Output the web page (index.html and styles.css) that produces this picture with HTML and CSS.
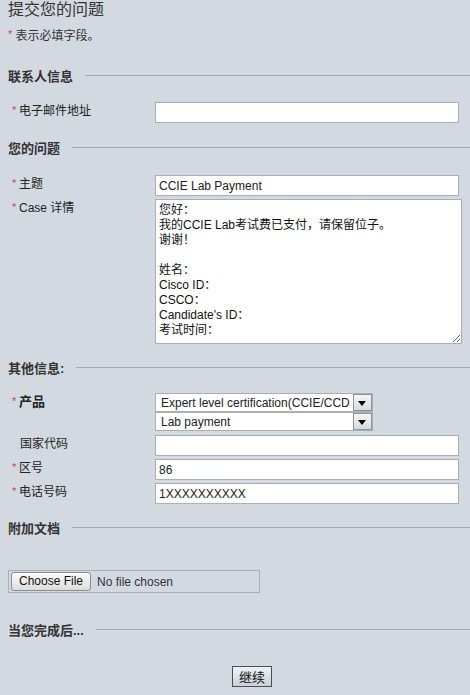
FILE: index.html
```html
<!DOCTYPE html>
<html lang="zh-CN">
<head>
    <meta charset="UTF-8">
    <meta name="viewport" content="width=device-width, initial-scale=1.0">
    <title>提交您的问题</title>
    <link rel="stylesheet" href="styles.css">
</head>
<body>
    <h1 class="title">提交您的问题</h1>
    <p class="note"><span class="req">*</span> 表示必填字段。</p>

    <div class="section s-contact"><span>联系人信息</span></div>
    <div class="row r-email">
        <label class="label"><span class="req">*</span>电子邮件地址</label>
        <input class="field" type="text" value="">
    </div>

    <div class="section s-question"><span>您的问题</span></div>
    <div class="row r-subject">
        <label class="label"><span class="req">*</span>主题</label>
        <input class="field" type="text" value="CCIE Lab Payment">
    </div>
    <div class="row r-detail">
        <label class="label"><span class="req">*</span>Case 详情</label>
        <textarea class="details">您好：
我的CCIE Lab考试费已支付，请保留位子。
谢谢！

姓名：
Cisco ID：
CSCO：
Candidate's ID：
考试时间：</textarea>
    </div>

    <div class="section s-other"><span>其他信息:</span></div>
    <div class="row r-product">
        <label class="label bold"><span class="req">*</span>产品</label>
        <div class="selects">
            <div class="select">
                <span class="select-text">Expert level certification(CCIE/CCD</span>
                <span class="select-arrow"></span>
            </div>
            <div class="select">
                <span class="select-text">Lab payment</span>
                <span class="select-arrow"></span>
            </div>
        </div>
    </div>
    <div class="row r-small r-first">
        <label class="label plain">国家代码</label>
        <input class="field" type="text" value="">
    </div>
    <div class="row r-small">
        <label class="label"><span class="req">*</span>区号</label>
        <input class="field" type="text" value="86">
    </div>
    <div class="row r-small">
        <label class="label"><span class="req">*</span>电话号码</label>
        <input class="field" type="text" value="1XXXXXXXXXX">
    </div>

    <div class="section s-attach"><span>附加文档</span></div>
    <div class="file-box">
        <span class="file-btn">Choose File</span>
        <span class="file-name">No file chosen</span>
    </div>

    <div class="section s-done"><span>当您完成后...</span></div>
    <div class="actions">
        <button class="submit">继续</button>
    </div>
</body>
</html>
```

FILE: styles.css
```css
body {
    margin: 0;
    padding: 0 0 0 8px;
    background: #d3d9e0;
    color: #222;
    font-family: "Liberation Sans", Arial, "Noto Sans CJK SC", sans-serif;
    font-size: 12px;
}
.title {
    margin: 0;
    height: 22px;
    font-size: 16px;
    font-weight: normal;
    line-height: 20px;
    color: #333;
}
.note {
    margin: 6px 0 0;
    line-height: 16px;
    color: #333;
}
.req {
    display: inline-block;
    width: 7px;
    font-size: 11px;
    line-height: 10px;
    vertical-align: top;
    margin-top: 1px;
    color: #d23a5c;
    font-weight: normal;
}
.note .req {
    width: auto;
}
.section {
    display: flex;
    align-items: center;
    gap: 12px;
    height: 16px;
    font-size: 13px;
    font-weight: bold;
    color: #333;
}
.section::after {
    content: "";
    flex: 1;
    border-top: 1px solid #a4abb3;
}
.s-contact { margin-top: 23px; }
.s-question { margin-top: 16px; }
.s-other { margin-top: 15px; }
.s-attach { margin-top: 15px; }
.s-done { margin-top: 28px; }

.row {
    display: flex;
    align-items: flex-start;
}
.r-email { margin-top: 19px; }
.r-subject { margin-top: 20px; }
.r-detail { margin-top: 3px; }
.r-product { margin-top: 18px; }
.r-small { margin-top: 3px; }
.r-first { margin-top: 4px; }

.label {
    width: 143px;
    padding: 2px 0 0 4px;
    line-height: 14px;
    color: #222;
}
.label.bold {
    font-size: 13px;
    font-weight: bold;
}
.label.plain {
    padding-left: 12px;
    width: 135px;
}
.field {
    box-sizing: border-box;
    width: 304px;
    height: 21px;
    margin: 0;
    padding: 0 3px;
    border: 1px solid #a8afb6;
    background: #fff;
    font-family: inherit;
    font-size: 12px;
    color: #222;
    outline: none;
}
.details {
    box-sizing: border-box;
    width: 307px;
    height: 145px;
    margin: 0;
    padding: 3px 3px;
    border: 1px solid #a8afb6;
    background: #fff;
    font-family: inherit;
    font-size: 12px;
    line-height: 15px;
    color: #111;
    overflow: hidden;
    outline: none;
}
.selects {
    display: flex;
    flex-direction: column;
}
.select {
    box-sizing: border-box;
    display: flex;
    width: 218px;
    height: 19px;
    border: 1px solid #a8afb6;
    background: #fff;
    overflow: hidden;
}
.select-text {
    flex: 1;
    padding: 1px 0 0 5px;
    line-height: 16px;
    white-space: nowrap;
    overflow: hidden;
    font-size: 12px;
}
.select-arrow {
    position: relative;
    width: 17px;
    border: 1px solid #8d9399;
    background: linear-gradient(#f6f6f6, #d9dadb);
}
.select-arrow::after {
    content: "";
    position: absolute;
    left: 4px;
    top: 6px;
    border-left: 4px solid transparent;
    border-right: 4px solid transparent;
    border-top: 5px solid #000;
}
.file-box {
    box-sizing: border-box;
    display: flex;
    align-items: center;
    gap: 6px;
    width: 252px;
    height: 23px;
    margin-top: 35px;
    padding-left: 2px;
    border: 1px solid #a8afb6;
}
.file-btn {
    box-sizing: border-box;
    width: 80px;
    height: 19px;
    border: 1px solid #8a8d91;
    border-radius: 3px;
    background: linear-gradient(#fdfdfd, #dcdcdc);
    text-align: center;
    line-height: 17px;
    font-size: 12px;
    color: #111;
}
.file-name {
    color: #333;
}
.actions {
    margin-top: 29px;
    padding-left: 26px;
    text-align: center;
}
.submit {
    box-sizing: border-box;
    width: 40px;
    height: 21px;
    padding: 0;
    border: 1px solid #4a4f55;
    border-radius: 0;
    background: linear-gradient(#eef2f5, #c9d1d9);
    font-family: inherit;
    font-size: 13px;
    color: #111;
}
```
